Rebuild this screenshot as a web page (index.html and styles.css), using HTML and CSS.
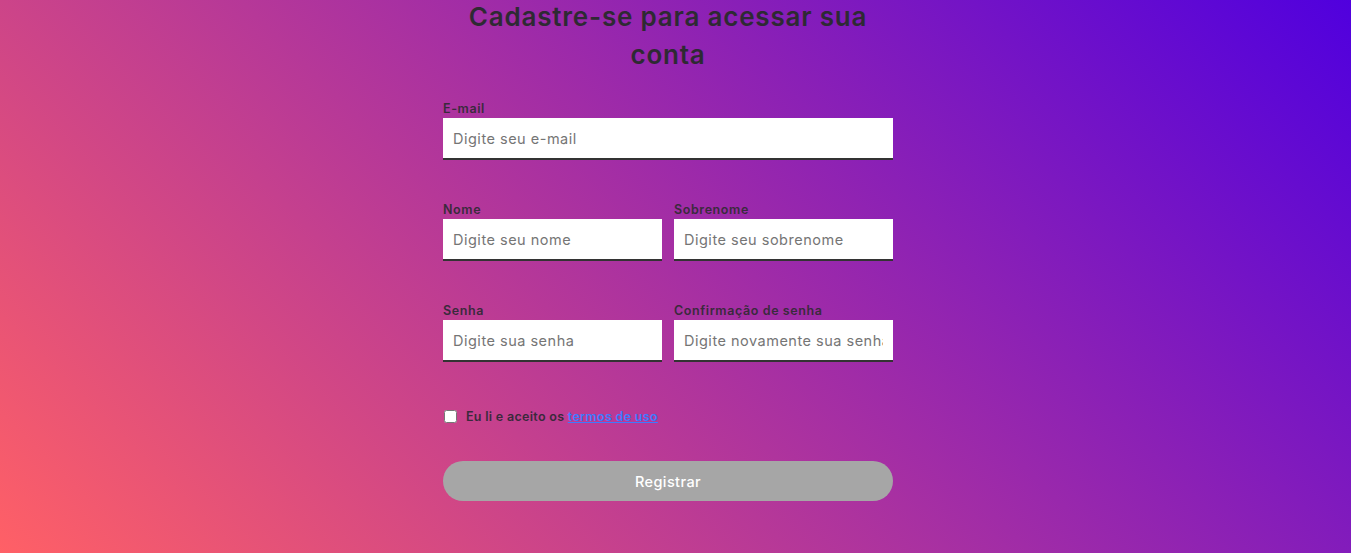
FILE: index.html
```html
<!DOCTYPE html>
<html lang="pt-BR">
<head>
<meta charset="utf-8">
<title>Cadastro</title>
<link rel="stylesheet" href="styles.css">
</head>
<body>
<main class="page">
  <form class="form">
    <h1 class="title">Cadastre-se para acessar sua conta</h1>

    <div class="row">
      <div class="field">
        <label class="label" for="email">E-mail</label>
        <input class="input" id="email" type="email" placeholder="Digite seu e-mail">
      </div>
    </div>

    <div class="row two">
      <div class="field">
        <label class="label" for="nome">Nome</label>
        <input class="input" id="nome" type="text" placeholder="Digite seu nome">
      </div>
      <div class="field">
        <label class="label" for="sobrenome">Sobrenome</label>
        <input class="input" id="sobrenome" type="text" placeholder="Digite seu sobrenome">
      </div>
    </div>

    <div class="row two">
      <div class="field">
        <label class="label" for="senha">Senha</label>
        <input class="input" id="senha" type="password" placeholder="Digite sua senha">
      </div>
      <div class="field">
        <label class="label" for="conf">Confirmação de senha</label>
        <input class="input" id="conf" type="password" placeholder="Digite novamente sua senha">
      </div>
    </div>

    <div class="terms">
      <input class="check" type="checkbox" id="termos">
      <label class="terms-text" for="termos">Eu li e aceito os <a class="link" href="#">termos de uso</a></label>
    </div>

    <button class="button" type="button">Registrar</button>
  </form>
</main>
</body>
</html>
```

FILE: styles.css
```css
* {
  box-sizing: border-box;
}

html, body {
  margin: 0;
  padding: 0;
}

body {
  min-height: 100vh;
  background: linear-gradient(45deg, #ff6066 0%, #5000de 100%);
  font-family: "Inter", "DejaVu Sans", sans-serif;
  color: #333;
}

.page {
  display: flex;
  justify-content: center;
  padding-right: 15px;
}

.form {
  width: 450px;
  display: flex;
  flex-direction: column;
}

.title {
  margin: -2px auto 24px;
  width: 430px;
  text-align: center;
  font-size: 26px;
  line-height: 38px;
  font-weight: 600;
  color: #2e2a33;
  letter-spacing: 0.8px;
}

.row {
  display: flex;
  gap: 12px;
  margin-bottom: 39px;
}

.field {
  flex: 1;
  display: flex;
  flex-direction: column;
  min-width: 0;
}

.label {
  height: 20px;
  line-height: 21px;
  font-size: 12.5px;
  font-weight: 600;
  letter-spacing: 0.6px;
  color: #3a2a3c;
}

.input {
  height: 42px;
  width: 100%;
  border: none;
  border-bottom: 2px solid #333;
  background: #fff;
  padding: 0 10px;
  font-family: inherit;
  font-size: 14.5px;
  letter-spacing: 0.5px;
  color: #333;
  outline: none;
}

.input::placeholder {
  color: #757575;
}

.terms {
  display: flex;
  align-items: center;
  height: 20px;
  margin-top: 5px;
  margin-bottom: 35px;
}

.check {
  margin: 0 9px 0 1px;
  width: 13px;
  height: 13px;
}

.terms-text {
  font-size: 12.5px;
  font-weight: 600;
  letter-spacing: 0.3px;
  color: #3a2a3c;
}

.link {
  color: #3d7bff;
  text-decoration: underline;
}

.button {
  height: 40px;
  width: 100%;
  border: none;
  border-radius: 20px;
  background: #a6a6a6;
  color: #fff;
  font-family: inherit;
  font-size: 14.5px;
  font-weight: 500;
  letter-spacing: 0.4px;
  cursor: pointer;
}
```
